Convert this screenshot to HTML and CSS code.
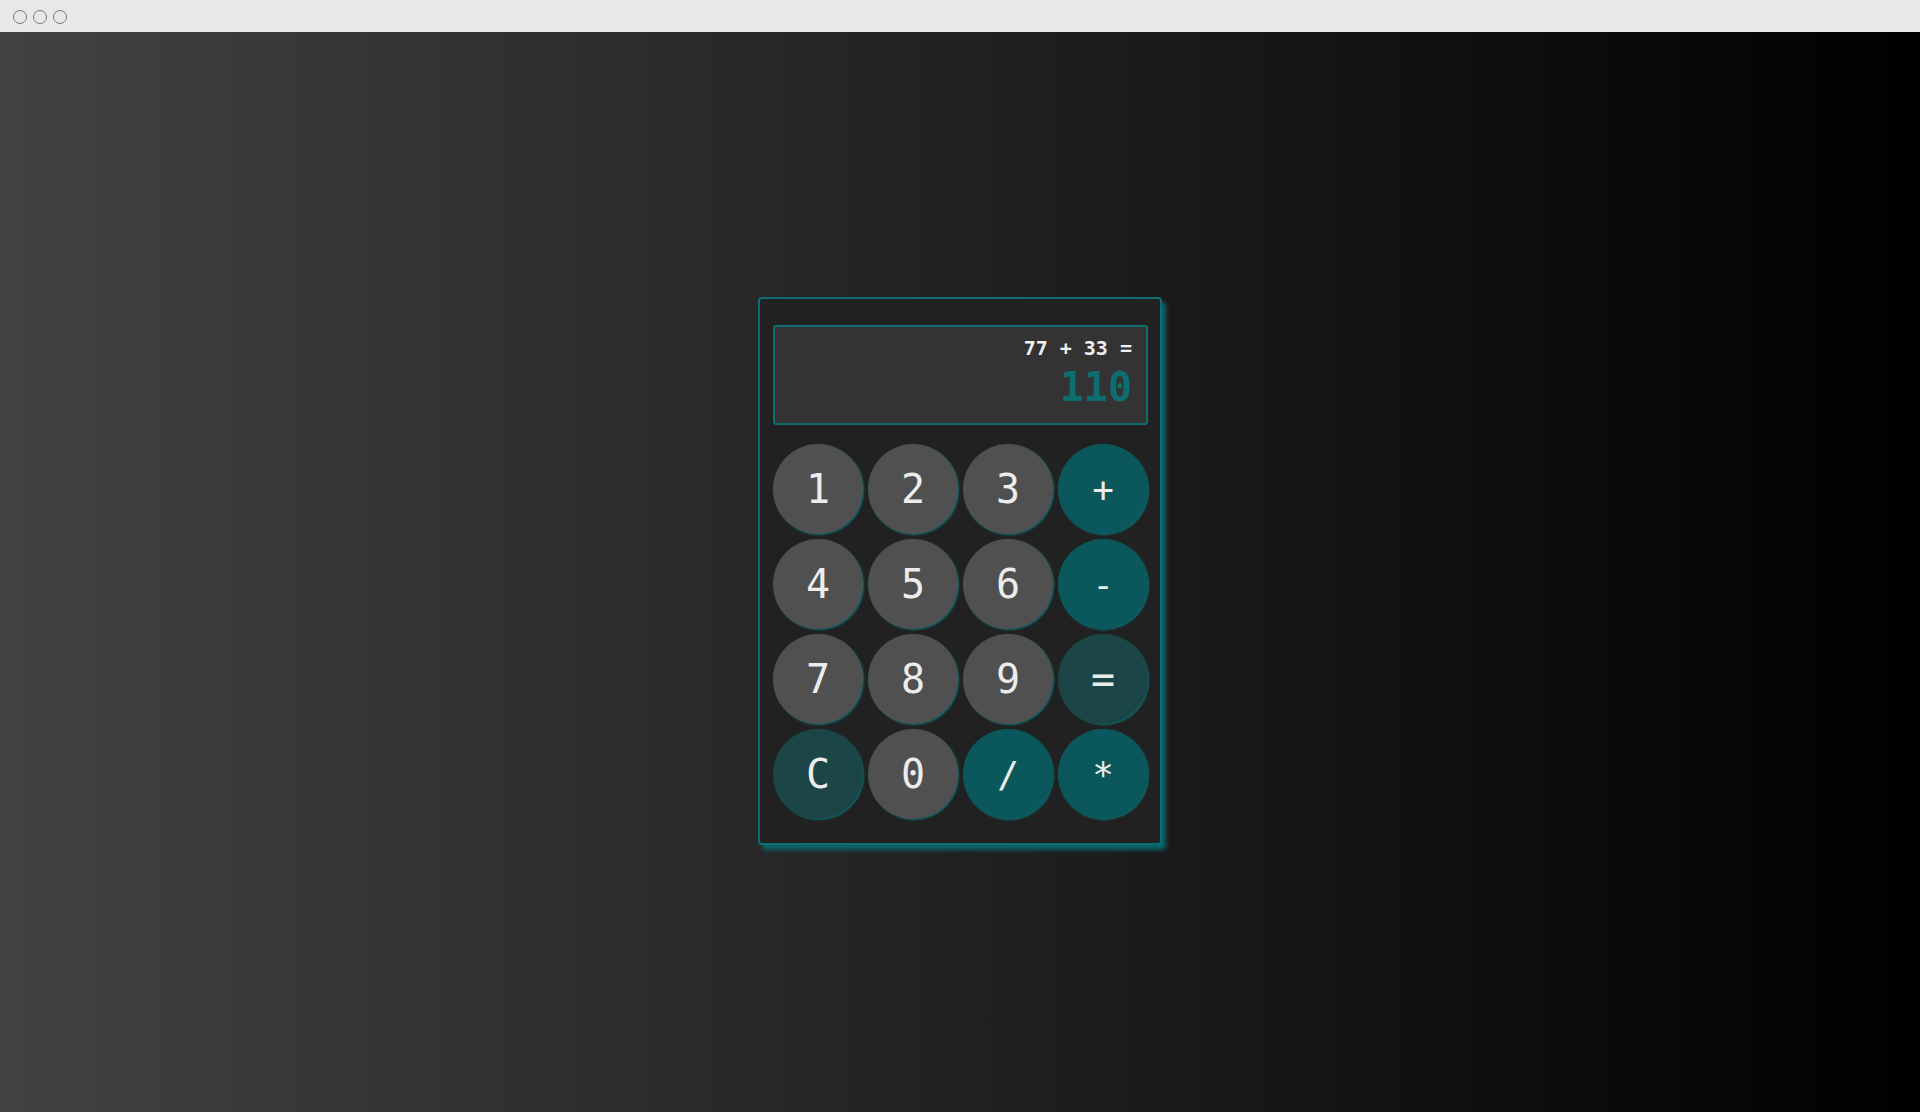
FILE: index.html
```html
<!DOCTYPE html>
<html lang="en">
<head>
<meta charset="utf-8">
<title>Calculator</title>
<link rel="stylesheet" href="styles.css">
</head>
<body>
<div class="titlebar">
  <span class="dot"></span><span class="dot"></span><span class="dot"></span>
</div>
<main class="stage">
  <div class="calc">
    <div class="display">
      <div class="expr">77 + 33 =</div>
      <div class="result">110</div>
    </div>
    <div class="keys">
      <button class="key num">1</button>
      <button class="key num">2</button>
      <button class="key num">3</button>
      <button class="key op">+</button>
      <button class="key num">4</button>
      <button class="key num">5</button>
      <button class="key num">6</button>
      <button class="key op">-</button>
      <button class="key num">7</button>
      <button class="key num">8</button>
      <button class="key num">9</button>
      <button class="key dark">=</button>
      <button class="key dark">C</button>
      <button class="key num">0</button>
      <button class="key op">/</button>
      <button class="key op">*</button>
    </div>
  </div>
</main>
</body>
</html>
```
FILE: styles.css
```css
* { box-sizing: border-box; }
html, body { margin: 0; padding: 0; height: 100%; }
body {
  display: flex;
  flex-direction: column;
  font-family: "DejaVu Sans Mono", "Liberation Mono", monospace;
  background: #000;
}
.titlebar {
  height: 32px;
  flex: 0 0 32px;
  background: #e8e8e8;
  display: flex;
  align-items: center;
  gap: 6px;
  padding-left: 13px;
  padding-top: 2px;
}
.dot {
  width: 14px;
  height: 14px;
  border-radius: 50%;
  border: 1.5px solid #7a7a7a;
}
.stage {
  flex: 1;
  display: flex;
  align-items: center;
  justify-content: center;
  background: linear-gradient(to right, #424242, #000);
}
.calc {
  width: 404px;
  height: 548px;
  margin-top: -2px;
  background: #212121;
  border: 2px solid #0d6d70;
  border-radius: 4px;
  box-shadow: 4px 5px 4px #0a6467;
  padding: 26px 12px 0 13px;
}
.display {
  width: 375px;
  height: 100px;
  background: #333333;
  border: 2px solid #0d6d70;
  border-radius: 3px;
  padding: 9px 14px 0 0;
  text-align: right;
  font-weight: bold;
}
.expr {
  font-size: 20px;
  line-height: 24px;
  color: #f0f0f0;
}
.result {
  margin-top: 5px;
  font-size: 40px;
  line-height: 44px;
  color: #0d6d70;
}
.keys {
  margin-top: 19px;
  display: grid;
  grid-template-columns: repeat(4, 90px);
  grid-auto-rows: 90px;
  gap: 5px;
}
.key {
  border: none;
  border-radius: 50%;
  padding: 0;
  font-family: "DejaVu Sans Mono", "Liberation Mono", monospace;
  font-size: 40px;
  color: #ececec;
  display: flex;
  align-items: center;
  justify-content: center;
  box-shadow: 1px 1px 2px #0d6d70;
}
.num { background: #505050; }
.op { background: #0a585b; font-size: 36px; }
.dark { background: #1c4547; }
```
